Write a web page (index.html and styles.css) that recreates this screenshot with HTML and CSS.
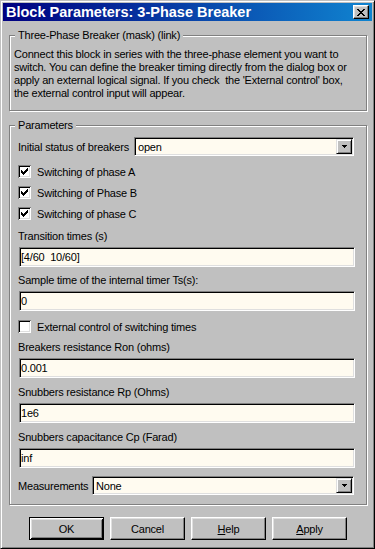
FILE: index.html
```html
<!DOCTYPE html>
<html>
<head>
    <title>Block Parameters: 3-Phase Breaker</title>
    <link rel="stylesheet" href="styles.css">
</head>
<body>
<div class="window">
    <div class="titlebar">
        <span class="title">Block Parameters: 3-Phase Breaker</span>
        <button type="button" class="close">
            <svg width="8" height="7" viewBox="0 0 8 7" shape-rendering="crispEdges"><path d="M0 0h2v1h-2zM6 0h2v1h-2zM1 1h2v1h-2zM5 1h2v1h-2zM2 2h4v1h-4zM3 3h2v1h-2zM2 4h4v1h-4zM1 5h2v1h-2zM5 5h2v1h-2zM0 6h2v1h-2zM6 6h2v1h-2z" fill="#000"/></svg>
        </button>
    </div>

    <div class="content">
        <fieldset class="group info">
            <legend>Three-Phase Breaker (mask) (link)</legend>
            <p>Connect this block in series with the three-phase element you want to<br>switch. You can define the breaker timing directly from the dialog box or<br>apply an external logical signal. If you check&nbsp; the 'External control' box,<br>the external control input will appear.</p>
        </fieldset>

        <fieldset class="group params">
            <legend>Parameters</legend>

            <div class="combo-row">
                <span>Initial status of breakers</span>
                <div class="combo status">
                    <span class="combo-text">open</span>
                    <span class="combo-btn"><svg width="5" height="3" viewBox="0 0 5 3" shape-rendering="crispEdges"><path d="M0 0h5v1h-1v1h-1v1h-1v-1h-1v-1h-1z" fill="#000"/></svg></span>
                </div>
            </div>

            <div class="check first">
                <span class="box"><svg width="13" height="13" viewBox="0 0 13 13" shape-rendering="crispEdges"><path d="M3 5h1v1h1v1h1v-1h1v-1h1v-1h1v-1h1v3h-1v1h-1v1h-1v1h-1v1h-1v-1h-1v-1h-1z" fill="#000"/></svg></span>
                <span>Switching of phase A</span>
            </div>
            <div class="check">
                <span class="box"><svg width="13" height="13" viewBox="0 0 13 13" shape-rendering="crispEdges"><path d="M3 5h1v1h1v1h1v-1h1v-1h1v-1h1v-1h1v3h-1v1h-1v1h-1v1h-1v1h-1v-1h-1v-1h-1z" fill="#000"/></svg></span>
                <span>Switching of Phase B</span>
            </div>
            <div class="check">
                <span class="box"><svg width="13" height="13" viewBox="0 0 13 13" shape-rendering="crispEdges"><path d="M3 5h1v1h1v1h1v-1h1v-1h1v-1h1v-1h1v3h-1v1h-1v1h-1v1h-1v1h-1v-1h-1v-1h-1z" fill="#000"/></svg></span>
                <span>Switching of phase C</span>
            </div>

            <div class="field after-checks">
                <span class="label">Transition times (s)</span>
                <input type="text" class="edit" value="[4/60  10/60]">
            </div>
            <div class="field after-edit">
                <span class="label">Sample time of the internal timer Ts(s):</span>
                <input type="text" class="edit" value="0">
            </div>

            <div class="check external">
                <span class="box"></span>
                <span>External control of switching times</span>
            </div>

            <div class="field after-external">
                <span class="label">Breakers resistance Ron (ohms)</span>
                <input type="text" class="edit" value="0.001">
            </div>
            <div class="field spaced">
                <span class="label">Snubbers resistance Rp (Ohms)</span>
                <input type="text" class="edit" value="1e6">
            </div>
            <div class="field spaced">
                <span class="label">Snubbers capacitance Cp (Farad)</span>
                <input type="text" class="edit" value="inf">
            </div>

            <div class="combo-row spaced">
                <span>Measurements</span>
                <div class="combo measure">
                    <span class="combo-text">None</span>
                    <span class="combo-btn"><svg width="5" height="3" viewBox="0 0 5 3" shape-rendering="crispEdges"><path d="M0 0h5v1h-1v1h-1v1h-1v-1h-1v-1h-1z" fill="#000"/></svg></span>
                </div>
            </div>
        </fieldset>

        <div class="buttons">
            <button type="button" class="btn default">OK</button>
            <button type="button" class="btn">Cancel</button>
            <button type="button" class="btn"><u>H</u>elp</button>
            <button type="button" class="btn"><u>A</u>pply</button>
        </div>
    </div>
</div>
</body>
</html>
```

FILE: styles.css
```css
html, body {
    margin: 0;
    padding: 0;
    background-color: #c0c0c0;
    color: #000000;
    font-family: "Liberation Sans", Arial, sans-serif;
    font-size: 11px;
    letter-spacing: -0.2px;
}

.window {
    box-sizing: border-box;
    display: flex;
    flex-direction: column;
    width: 375px;
    height: 549px;
    padding: 2px;
    background-color: #c0c0c0;
    border: 1px solid;
    border-color: #c0c0c0 #000000 #000000 #c0c0c0;
    box-shadow: inset 1px 1px #ffffff, inset -1px -1px #808080;
}

/* title bar */
.titlebar {
    display: flex;
    align-items: center;
    justify-content: space-between;
    height: 18px;
    padding: 0 3px 0 3px;
    background: linear-gradient(to right, #000080, #1084d0);
}

.title {
    color: #ffffff;
    font-size: 14.5px;
    font-weight: bold;
    line-height: 18px;
    letter-spacing: 0;
}

.close {
    display: flex;
    align-items: center;
    justify-content: center;
    width: 16px;
    height: 14px;
    margin: 0;
    padding: 0;
    background-color: #c0c0c0;
    border: 1px solid;
    border-color: #ffffff #000000 #000000 #ffffff;
    box-shadow: inset -1px -1px #808080, inset 1px 1px #dfdfdf;
}

.close svg {
    display: block;
}

.content {
    flex: 1;
    display: flex;
    flex-direction: column;
    padding: 8px 5px 0 6px;
}

/* group boxes */
.group {
    min-width: 0;
    margin: 0;
    border: 1px solid #808080;
    box-shadow: inset 1px 1px #ffffff, 1px 1px #ffffff;
}

.group legend {
    padding: 0 3px;
    line-height: 13px;
    background-color: #c0c0c0;
}

.info {
    padding: 6px 4px 10px 4px;
}

.info legend {
    margin-left: 1px;
}

.info p {
    margin: 0;
    line-height: 13px;
    white-space: nowrap;
}

.params {
    margin-top: 8px;
    padding: 5px 11px 9px 8px;
}

.params legend {
    margin-left: -3px;
}

/* combo boxes */
.combo-row {
    display: flex;
    align-items: center;
    justify-content: space-between;
    height: 19px;
    margin-right: 1px;
}

.combo {
    box-sizing: border-box;
    display: flex;
    align-items: center;
    height: 19px;
    padding: 1px 1px 1px 2px;
    background-color: #fffbf0;
    border: 1px solid;
    border-color: #808080 #ffffff #ffffff #808080;
    box-shadow: inset 1px 1px #000000, inset -1px -1px #dfdfdf;
}

.status {
    width: 220px;
}

.measure {
    width: 262px;
}

.combo-text {
    flex: 1;
    padding-left: 1px;
}

.combo-btn {
    box-sizing: border-box;
    display: flex;
    align-items: center;
    justify-content: center;
    width: 16px;
    height: 15px;
    background-color: #c0c0c0;
    border: 1px solid;
    border-color: #dfdfdf #000000 #000000 #dfdfdf;
    box-shadow: inset 1px 1px #ffffff, inset -1px -1px #808080;
}

.combo-btn svg {
    display: block;
}

/* check boxes */
.check {
    display: flex;
    align-items: center;
    gap: 6px;
    height: 21px;
}

.check.first {
    margin-top: 5px;
}

.check.external {
    margin-top: 5px;
}

.box {
    width: 13px;
    height: 13px;
    background-color: #ffffff;
    box-shadow: inset 1px 1px #808080, inset -1px -1px #ffffff, inset 2px 2px #000000, inset -2px -2px #dfdfdf;
}

.box svg {
    display: block;
}

/* edit fields */
.field {
    display: flex;
    flex-direction: column;
}

.field .label {
    height: 13px;
    line-height: 13px;
    margin-bottom: 4px;
}

.after-checks {
    margin-top: 6px;
}

.after-edit {
    margin-top: 7px;
}

.after-external {
    margin-top: 4px;
}

.spaced {
    margin-top: 8px;
}

.edit {
    box-sizing: border-box;
    height: 20px;
    margin: 0 0 0 1px;
    padding: 0 1px;
    font: inherit;
    letter-spacing: inherit;
    color: #000000;
    background-color: #fffbf0;
    border: 1px solid;
    border-color: #808080 #ffffff #ffffff #808080;
    box-shadow: inset 1px 1px #000000, inset -1px -1px #dfdfdf;
    outline: none;
}

/* dialog buttons */
.buttons {
    display: flex;
    justify-content: center;
    gap: 6px;
    margin-top: 12px;
}

.btn {
    width: 75px;
    height: 23px;
    padding: 0;
    font: inherit;
    letter-spacing: inherit;
    color: #000000;
    background-color: #c0c0c0;
    border: 1px solid;
    border-color: #ffffff #000000 #000000 #ffffff;
    box-shadow: inset -1px -1px #808080, inset 1px 1px #dfdfdf;
}

.btn.default {
    border-color: #000000;
    box-shadow: inset 1px 1px #ffffff, inset -1px -1px #000000, inset 2px 2px #dfdfdf, inset -2px -2px #808080;
}
```
